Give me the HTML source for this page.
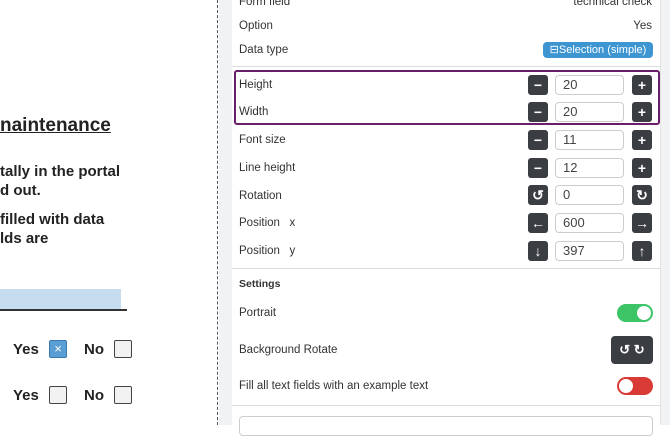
<!DOCTYPE html>
<html><head><style>
*{margin:0;padding:0;box-sizing:border-box}
body{width:670px;height:425px;overflow:hidden;background:#fff;font-family:"Liberation Sans",sans-serif;position:relative}
.a{position:absolute}
.doc{font-weight:bold;color:#222;font-size:15px}
.lbl{position:absolute;left:239px;font-size:11.5px;color:#333}
.btn{position:absolute;width:20px;height:20px;background:#3a3d42;border-radius:3px;color:#fff;font-size:14px;font-weight:bold;text-align:center;line-height:20px}
.inp{position:absolute;left:555px;width:69px;height:20px;border:1px solid #ccc;border-radius:4px;font-size:13px;color:#444;padding-left:7px;line-height:18px}
.sep{position:absolute;left:232px;width:428px;height:1px;background:#ddd}
.cb{position:absolute;width:18px;height:18px;border:1.5px solid #444;border-radius:2px;background:#f2f2f2}
</style></head><body>
<div class="a doc" style="left:0;top:115px;font-size:19px;text-decoration:underline">naintenance</div>
<div class="a doc" style="left:0;top:162px;line-height:19px">tally in the portal<br>d out.</div>
<div class="a doc" style="left:0;top:210px;line-height:19px">filled with data<br>lds are</div>
<div class="a" style="left:0;top:289px;width:121px;height:20px;background:#c6dcef"></div>
<div class="a" style="left:0;top:309px;width:127px;height:1.5px;background:#333"></div>
<div class="a doc" style="left:13px;top:341px">Yes</div>
<div class="cb" style="left:49px;top:340px;background:#5a9fd4;border-color:#3a78b0;color:#fff;font-size:13px;line-height:15px;text-align:center">×</div>
<div class="a doc" style="left:84px;top:341px">No</div>
<div class="cb" style="left:114px;top:340px"></div>
<div class="a doc" style="left:13px;top:387px">Yes</div>
<div class="cb" style="left:49px;top:386px"></div>
<div class="a doc" style="left:84px;top:387px">No</div>
<div class="cb" style="left:114px;top:386px"></div>
<div class="a" style="left:217px;top:0;height:425px;border-left:1px dashed #555"></div>
<div class="a" style="left:219px;top:0;width:13px;height:425px;background:#f1f2f3"></div>
<div class="a" style="left:660px;top:0;width:10px;height:425px;background:#f1f2f3;border-left:1px solid #e2e2e2"></div>
<div class="lbl" style="top:-4px">Form field</div><div class="a" style="right:18px;top:-4px;font-size:11.5px;color:#333">technical check</div>
<div class="lbl" style="top:20px">Option</div><div class="a" style="right:18px;top:20px;font-size:11.5px;color:#333">Yes</div>
<div class="lbl" style="top:44px">Data type</div>
<div class="a" style="left:543px;top:42px;width:110px;height:16px;background:#3d96d2;border-radius:4px;color:#fff;font-size:11px;line-height:16px;text-align:center">⊟Selection (simple)</div>
<div class="sep" style="top:66px"></div>
<div class="a" style="left:234px;top:70px;width:426px;height:55px;border:2.5px solid #6a1d6a;border-radius:3px"></div>
<div class="lbl" style="top:79px">Height</div><div class="btn" style="left:528px;top:75px">−</div><div class="inp" style="top:75px">20</div><div class="btn" style="left:632px;top:75px">+</div>
<div class="lbl" style="top:106px">Width</div><div class="btn" style="left:528px;top:102px">−</div><div class="inp" style="top:102px">20</div><div class="btn" style="left:632px;top:102px">+</div>
<div class="lbl" style="top:134px">Font size</div><div class="btn" style="left:528px;top:130px">−</div><div class="inp" style="top:130px">11</div><div class="btn" style="left:632px;top:130px">+</div>
<div class="lbl" style="top:162px">Line height</div><div class="btn" style="left:528px;top:158px">−</div><div class="inp" style="top:158px">12</div><div class="btn" style="left:632px;top:158px">+</div>
<div class="lbl" style="top:190px">Rotation</div><div class="btn" style="left:528px;top:185px">↺</div><div class="inp" style="top:185px">0</div><div class="btn" style="left:632px;top:185px">↻</div>
<div class="lbl" style="top:217px">Position &nbsp; x</div><div class="btn" style="left:528px;top:213px">←</div><div class="inp" style="top:213px">600</div><div class="btn" style="left:632px;top:213px">→</div>
<div class="lbl" style="top:245px">Position &nbsp; y</div><div class="btn" style="left:528px;top:241px">↓</div><div class="inp" style="top:241px">397</div><div class="btn" style="left:632px;top:241px">↑</div>
<div class="sep" style="top:268px"></div>
<div class="lbl" style="top:278px;font-weight:bold;font-size:10.5px">Settings</div>
<div class="lbl" style="top:307px">Portrait</div>
<div class="a" style="left:617px;top:304px;width:36px;height:18px;border-radius:9px;background:#3cc466"></div>
<div class="a" style="left:637px;top:306px;width:14px;height:14px;border-radius:7px;background:#fff"></div>
<div class="lbl" style="top:344px">Background Rotate</div>
<div class="btn" style="left:611px;top:336px;width:42px;height:28px;line-height:28px;font-size:13px;border-radius:4px">↺ ↻</div>
<div class="lbl" style="top:380px">Fill all text fields with an example text</div>
<div class="a" style="left:617px;top:377px;width:36px;height:18px;border-radius:9px;background:#d93a35"></div>
<div class="a" style="left:619px;top:379px;width:14px;height:14px;border-radius:7px;background:#fff"></div>
<div class="sep" style="top:405px"></div>
<div class="a" style="left:239px;top:416px;width:414px;height:20px;border:1px solid #ccc;border-radius:4px"></div>
</body></html>
